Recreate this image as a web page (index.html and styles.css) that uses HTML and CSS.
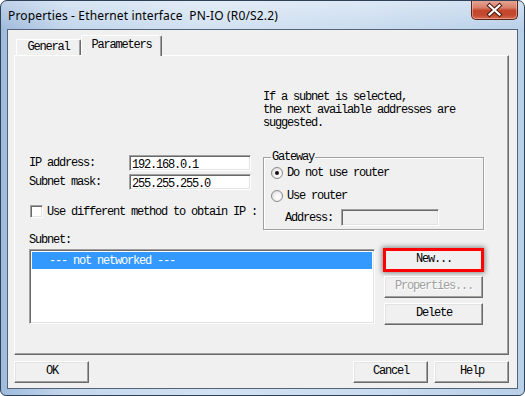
FILE: index.html
```html
<!DOCTYPE html>
<html>
<head>
<meta charset="utf-8">
<title>Properties - Ethernet interface PN-IO (R0/S2.2)</title>
<link rel="stylesheet" href="styles.css">
</head>
<body>
<div class="window">
  <div class="titlebar">
    <span class="title">Properties - Ethernet interface&nbsp; PN-IO (R0/S2.2)</span>
    <div class="close">
      <svg width="45" height="18" viewBox="0 0 45 18">
        <path d="M17.5 4.5 L27.5 13.5 M27.5 4.5 L17.5 13.5" stroke="#4a1a12" stroke-width="4.2" stroke-linecap="square" fill="none"/>
        <path d="M17.5 4.5 L27.5 13.5 M27.5 4.5 L17.5 13.5" stroke="#fff" stroke-width="2.2" stroke-linecap="square" fill="none"/>
      </svg>
    </div>
  </div>
  <div class="client">
    <div class="tabs">
      <div class="tab">General</div>
      <div class="tab active">Parameters</div>
    </div>
    <div class="panel">
      <div class="top">
        <div class="left">
          <div class="row"><span class="label">IP address:</span><div class="input">192.168.0.1</div></div>
          <div class="row row2"><span class="label">Subnet mask:</span><div class="input">255.255.255.0</div></div>
          <div class="check-row"><span class="checkbox"></span><span>Use different method to obtain IP :</span></div>
        </div>
        <div class="right">
          <p class="hint">If a subnet is selected,<br>the next available addresses are<br>suggested.</p>
          <fieldset class="group">
            <legend>Gateway</legend>
            <div class="radio-row"><span class="radio checked"></span><span>Do not use router</span></div>
            <div class="radio-row second"><span class="radio"></span><span>Use router</span></div>
            <div class="addr-row"><span>Address:</span><div class="input addr"></div></div>
          </fieldset>
        </div>
      </div>
      <div class="subnet-label">Subnet:</div>
      <div class="subnet">
        <div class="listbox"><div class="item">--- not networked ---</div></div>
        <div class="side-buttons">
          <div class="btn side highlight">New...</div>
          <div class="btn side disabled">Properties...</div>
          <div class="btn side">Delete</div>
        </div>
      </div>
    </div>
    <div class="footer">
      <div class="btn">OK</div>
      <div class="footer-right">
        <div class="btn">Cancel</div>
        <div class="btn">Help</div>
      </div>
    </div>
  </div>
</div>
</body>
</html>
```
FILE: styles.css
```css
* { box-sizing: border-box; }
html, body { margin: 0; padding: 0; }
body { width: 525px; height: 396px; overflow: hidden; background: #fff; }

.window {
  width: 525px;
  height: 396px;
  border: 1px solid #2f4157;
  border-radius: 7px 7px 6px 6px;
  background:
    linear-gradient(180deg, rgba(255,255,255,0.35), rgba(255,255,255,0) 28px),
    linear-gradient(90deg, #9fbbdc 0%, #c2d6ec 12%, #d3e2f2 40%, #cadcef 70%, #b9d0e9 100%);
  padding: 0 6px 6px 6px;
  display: flex;
  flex-direction: column;
  overflow: hidden;
}

.titlebar {
  height: 28px;
  flex: none;
  display: flex;
  align-items: flex-start;
  justify-content: space-between;
  padding-left: 1px;
}
.title {
  font-family: "Noto Sans", "DejaVu Sans", sans-serif;
  font-size: 12px;
  letter-spacing: 0.15px;
  line-height: 29px;
  color: #000;
  white-space: pre;
}
.close {
  width: 47px;
  height: 20px;
  margin-top: -1px;
  border: 1px solid #5b2419;
  border-top: none;
  border-radius: 0 0 5px 5px;
  background: linear-gradient(180deg, #e7a898 0%, #d8806b 40%, #c5462c 55%, #c24a30 80%, #d66a4e 100%);
  box-shadow: inset 0 0 0 1px rgba(255,210,200,0.45);
  display: flex;
  align-items: center;
  justify-content: center;
}
.close svg { display: block; }

.client {
  height: 360px;
  flex: none;
  border: 1px solid #52637a;
  background: #f0f0f0;
  font-family: "Liberation Mono", "Courier New", monospace;
  font-size: 12px;
  letter-spacing: -1.2px;
  line-height: 12px;
  color: #000;
}

.tabs {
  height: 20px;
  margin: 5px 0 0 8px;
  display: flex;
  align-items: flex-end;
}
.tab {
  width: 65px;
  height: 16px;
  border: 1px solid;
  border-bottom: none;
  border-color: #fff #696969 transparent #fff;
  border-radius: 2px 2px 0 0;
  box-shadow: inset -1px 0 0 #a0a0a0;
  text-align: center;
  line-height: 15px;
}
.tab.active {
  width: 81px;
  height: 21px;
  margin-bottom: -1px;
  position: relative;
  z-index: 1;
  background: #f0f0f0;
  line-height: 18px;
}

.panel {
  width: 495px;
  height: 300px;
  margin-left: 6px;
  border: 1px solid;
  border-color: #fff #696969 #696969 #fff;
  box-shadow: inset -1px -1px 0 #a0a0a0;
  padding-left: 14px;
}

.top {
  height: 177px;
  display: flex;
}
.left {
  width: 234px;
  padding-top: 99px;
}
.row {
  height: 16px;
  display: flex;
  align-items: center;
}
.row2 { margin-top: 3px; }
.label { width: 100px; }
.input {
  width: 122px;
  height: 16px;
  background: #fff;
  border: 1px solid;
  border-color: #a0a0a0 #fff #fff #a0a0a0;
  box-shadow: inset 1px 1px 0 #696969, inset -1px -1px 0 #e3e3e3;
  padding: 3px 0 0 2px;
  line-height: 12px;
}
.check-row {
  margin-top: 15px;
  height: 13px;
  display: flex;
  align-items: center;
  gap: 4px;
  padding-left: 1px;
}
.checkbox {
  width: 13px;
  height: 13px;
  flex: none;
  background: #fff;
  border: 1px solid;
  border-color: #a0a0a0 #fff #fff #a0a0a0;
  box-shadow: inset 1px 1px 0 #696969, inset -1px -1px 0 #e3e3e3;
}

.right { width: 221px; }
.hint {
  margin: 35px 0 0 0;
  line-height: 13px;
}
.group {
  margin: 21px 0 0 0;
  width: 221px;
  padding: 2px 6px 3px 7px;
  border: 1px solid #a0a0a0;
  box-shadow: 1px 1px 0 #fff, inset 1px 1px 0 #fff;
}
.group legend {
  padding: 0 1px;
  margin-left: 0;
  line-height: 12px;
}
.radio-row {
  height: 16px;
  display: flex;
  align-items: center;
  gap: 4px;
}
.radio-row.second { margin-top: 7px; }
.radio {
  width: 12px;
  height: 12px;
  flex: none;
  border-radius: 50%;
  border: 1px solid #8a8a8a;
  background: radial-gradient(circle at 60% 60%, #fff 0%, #f4f4f4 40%, #cfcfcf 100%);
  display: flex;
  align-items: center;
  justify-content: center;
}
.radio.checked::after {
  content: "";
  width: 4px;
  height: 4px;
  border-radius: 50%;
  background: #111;
}
.addr-row {
  margin-top: 5px;
  padding-left: 14px;
  height: 17px;
  display: flex;
  align-items: center;
  gap: 8px;
}
.input.addr {
  width: 98px;
  height: 17px;
  background: #f0f0f0;
}

.subnet-label {
  margin-top: 1px;
  height: 12px;
}
.subnet {
  margin-top: 3px;
  display: flex;
  align-items: flex-start;
}
.listbox {
  width: 346px;
  height: 75px;
  background: #fff;
  border: 1px solid;
  border-color: #a0a0a0 #fff #fff #a0a0a0;
  box-shadow: inset 1px 1px 0 #696969, inset -1px -1px 0 #e3e3e3;
  padding: 2px;
}
.item {
  height: 17px;
  background: #3399ff;
  color: #fff;
  padding: 3px 0 0 17px;
}
.side-buttons {
  margin-left: 9px;
  display: flex;
  flex-direction: column;
  gap: 5px;
}

.btn {
  width: 75px;
  height: 22px;
  border: 1px solid;
  border-color: #fff #696969 #696969 #fff;
  box-shadow: inset -1px -1px 0 #a0a0a0, inset 1px 1px 0 #e3e3e3;
  background: #f0f0f0;
  text-align: center;
  line-height: 19px;
  padding-left: 1px;
}
.btn.side { width: 99px; }
.btn.highlight {
  outline: 3px solid #ff0000;
  outline-offset: -2px;
  box-shadow: inset -1px -1px 0 #a0a0a0, inset 1px 1px 0 #e3e3e3, 0 0 5px 2px rgba(0,0,0,0.45);
}
.btn.disabled {
  color: #a0a0a0;
  text-shadow: 1px 1px 0 #fff;
}

.footer {
  margin: 6px 8px 0 6px;
  display: flex;
  justify-content: space-between;
}
.footer-right {
  display: flex;
  gap: 6px;
}
```
